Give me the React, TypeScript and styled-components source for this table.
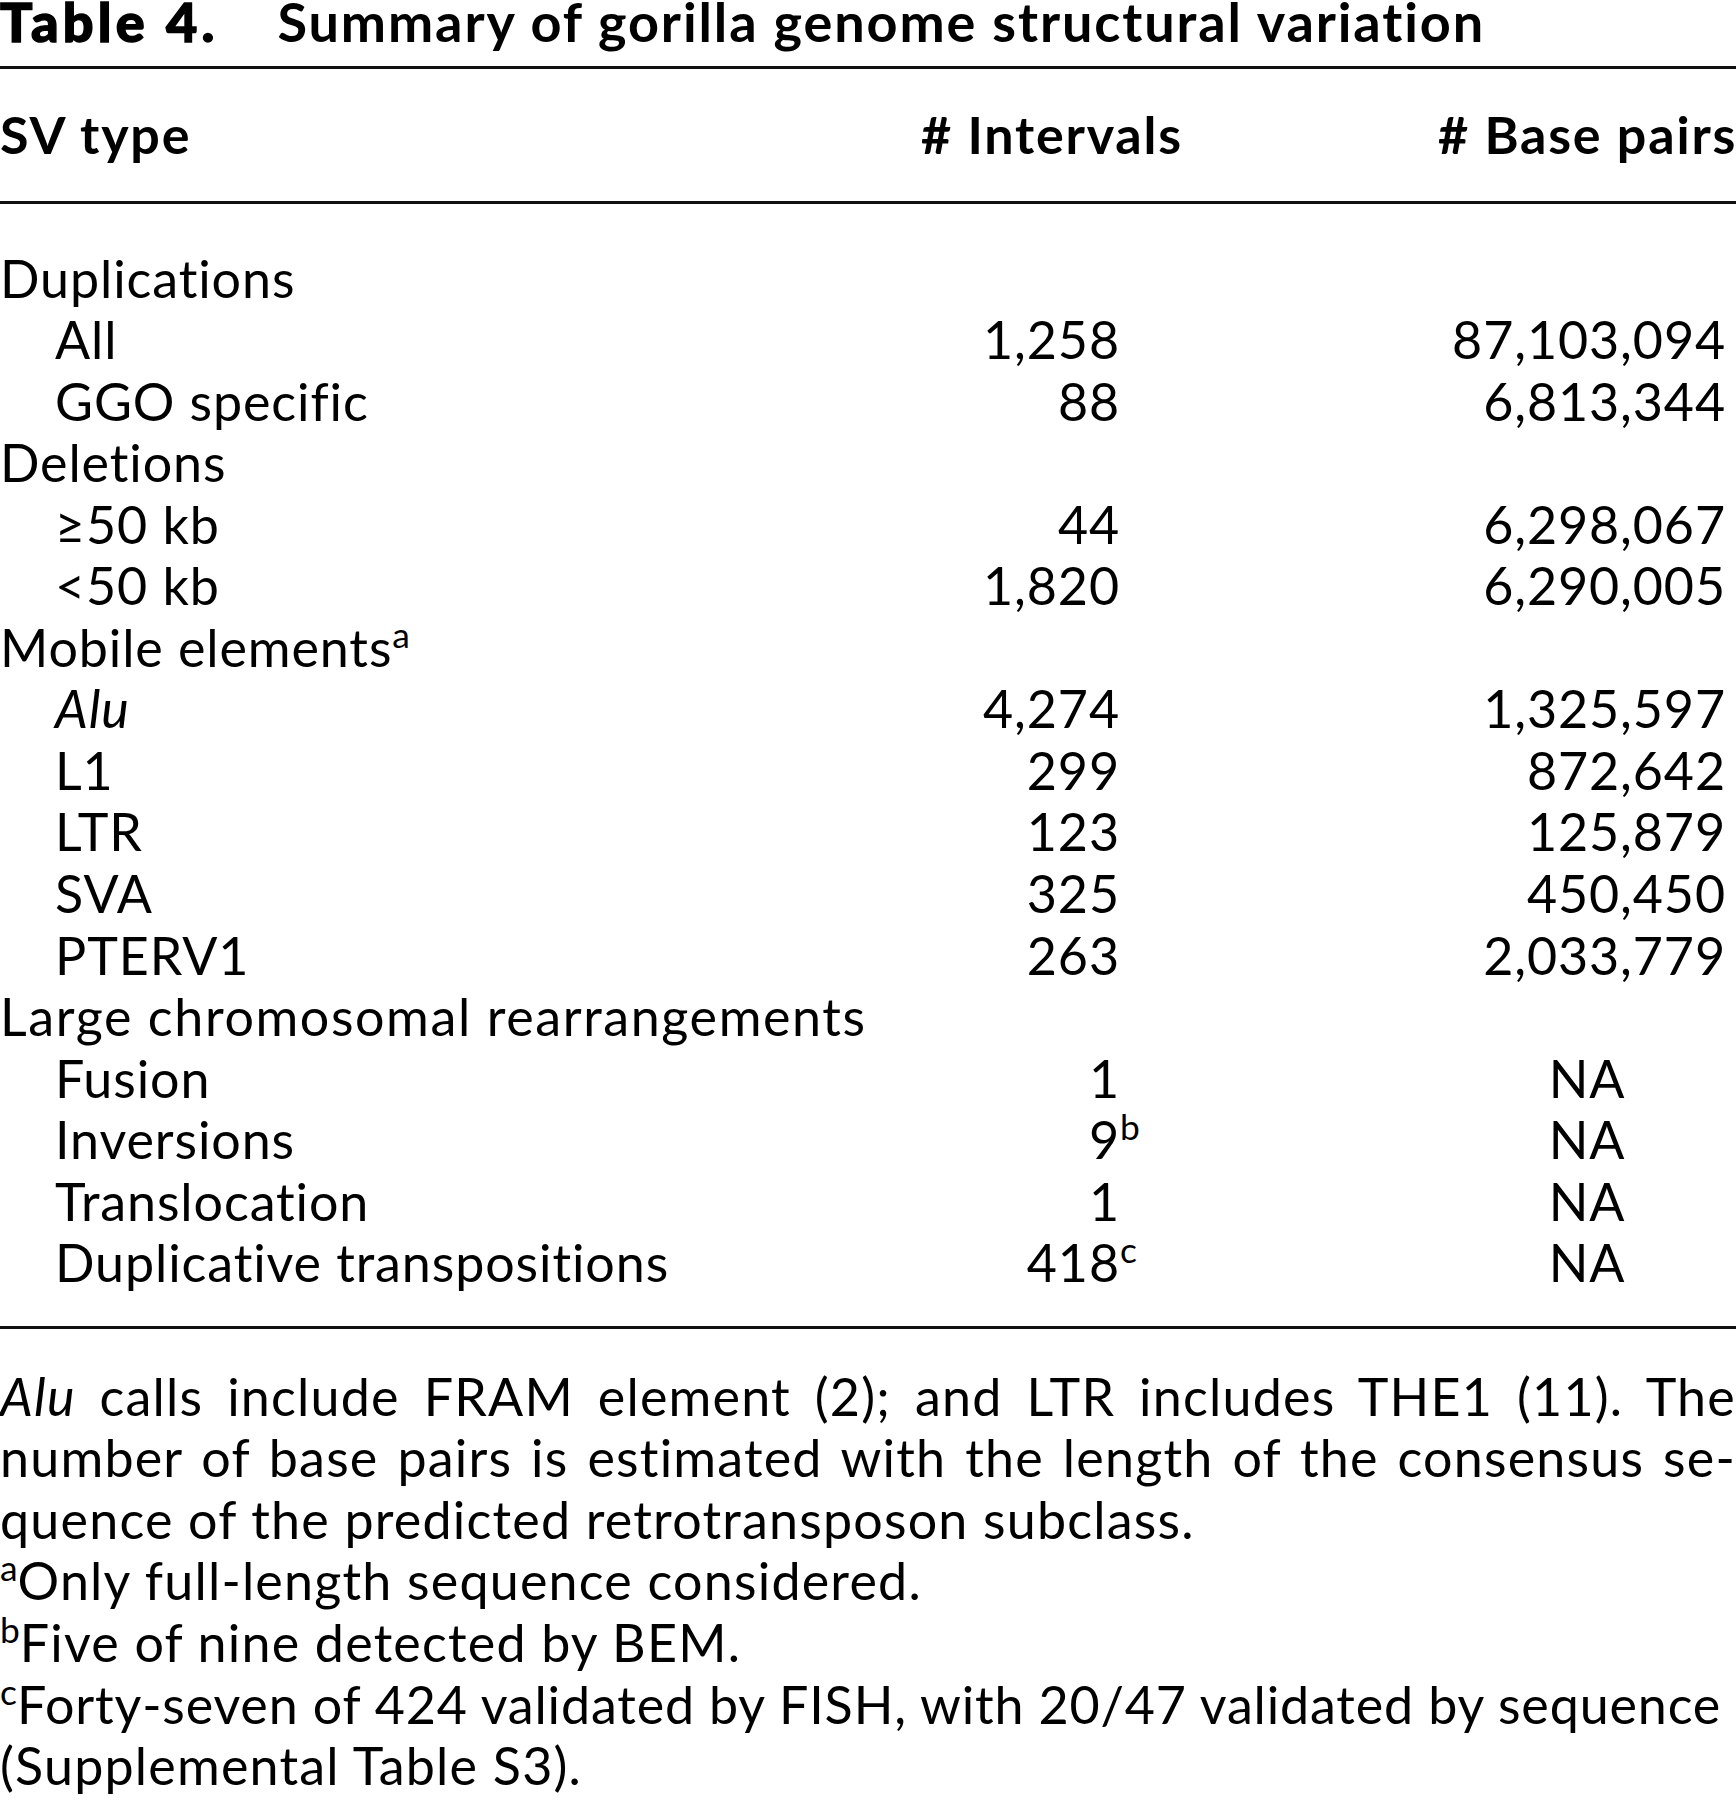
import React from "react";
import styled, { createGlobalStyle } from "styled-components";

const FONT = `"Lato", "Open Sans", "Liberation Sans", sans-serif`;

const Global = createGlobalStyle`
  html, body { margin: 0; padding: 0; background: #ffffff; }
  body { font-family: ${FONT}; color: #000; }
`;

const Page = styled.div`
  width: 1736px;
  overflow: hidden;
  font-size: 52px;
  letter-spacing: 0.9px;
  line-height: 61.55px;
  color: #000;
`;

const Caption = styled.div`
  display: flex;
  align-items: baseline;
  gap: 59px;
  height: 65.5px;
  font-size: 54px;
  line-height: 44px;
  white-space: nowrap;
`;

const CaptionLabel = styled.span`
  font-weight: 900;
  letter-spacing: 4.2px;
  -webkit-text-stroke: 1.4px #000;
`;

const CaptionTitle = styled.span`
  font-weight: 700;
  letter-spacing: 1.9px;
`;

const Rule = styled.div`
  height: 3px;
  background: #111;
`;

const HeadRow = styled.div`
  display: grid;
  grid-template-columns: 952px 200px 1fr;
  align-items: center;
  height: 132px;
  font-weight: 700;
  letter-spacing: 1.8px;
  white-space: nowrap;
`;

const HeadCell = styled.div<{ $center?: boolean; $offset?: number }>`
  display: flex;
  justify-content: ${(p) => (p.$center ? "center" : "flex-start")};
  padding-left: ${(p) => p.$offset ?? 0}px;
`;

const Body = styled.div`
  padding: 44px 0 32px;
`;

const Row = styled.div`
  display: grid;
  grid-template-columns: 952px 200px 1fr;
  height: 61.55px;
  white-space: nowrap;
`;

const LabelCell = styled.div<{ $indent?: boolean; $wide?: boolean }>`
  padding-left: ${(p) => (p.$indent ? "55px" : "0")};
  letter-spacing: ${(p) => (p.$wide ? "1.6px" : "0.9px")};
`;

const NumCell = styled.div<{ $pad: number; $offset?: number; $center?: boolean }>`
  text-align: ${(p) => (p.$center ? "center" : "right")};
  padding-left: ${(p) => p.$offset ?? 0}px;
  padding-right: ${(p) => (p.$center ? 0 : p.$pad)}px;
`;

const Sup = styled.sup<{ $hang?: boolean }>`
  font-size: 0.68em;
  letter-spacing: 0;
  line-height: 0;
  vertical-align: 0.55em;
  ${(p) => (p.$hang ? "display: inline-block; width: 0; overflow: visible;" : "")}
`;

const Notes = styled.div`
  padding-top: 37px;
  letter-spacing: 1.2px;
`;

const NoteLine = styled.div<{ $justify?: boolean; $tight?: boolean }>`
  white-space: ${(p) => (p.$justify ? "normal" : "nowrap")};
  text-align: ${(p) => (p.$justify ? "justify" : "left")};
  text-align-last: ${(p) => (p.$justify ? "justify" : "left")};
  ${(p) => (p.$tight ? "letter-spacing: 0.85px;" : "")}
`;

type RowData = {
  label: React.ReactNode;
  indent?: boolean;
  wide?: boolean;
  iv?: string;
  ivSup?: string;
  bp?: string;
};

const rows: RowData[] = [
  { label: "Duplications" },
  { label: "All", indent: true, iv: "1,258", bp: "87,103,094" },
  { label: "GGO specific", indent: true, iv: "88", bp: "6,813,344" },
  { label: "Deletions" },
  { label: "\u226550 kb", indent: true, iv: "44", bp: "6,298,067" },
  { label: "<50 kb", indent: true, iv: "1,820", bp: "6,290,005" },
  { label: (<>Mobile elements<Sup>a</Sup></>) },
  { label: <i>Alu</i>, indent: true, iv: "4,274", bp: "1,325,597" },
  { label: "L1", indent: true, iv: "299", bp: "872,642" },
  { label: "LTR", indent: true, iv: "123", bp: "125,879" },
  { label: "SVA", indent: true, iv: "325", bp: "450,450" },
  { label: "PTERV1", indent: true, iv: "263", bp: "2,033,779" },
  { label: "Large chromosomal rearrangements", wide: true },
  { label: "Fusion", indent: true, iv: "1", bp: "NA" },
  { label: "Inversions", indent: true, iv: "9", ivSup: "b", bp: "NA" },
  { label: "Translocation", indent: true, iv: "1", bp: "NA" },
  { label: "Duplicative transpositions", indent: true, iv: "418", ivSup: "c", bp: "NA" },
];

export default function App() {
  return (
    <>
      <Global />
      <Page>
        <Caption>
          <CaptionLabel>Table 4.</CaptionLabel>
          <CaptionTitle>Summary of gorilla genome structural variation</CaptionTitle>
        </Caption>
        <Rule />
        <HeadRow>
          <HeadCell>SV type</HeadCell>
          <HeadCell $center># Intervals</HeadCell>
          <HeadCell $offset={286}># Base pairs</HeadCell>
        </HeadRow>
        <Rule />
        <Body>
          {rows.map((r, i) => (
            <Row key={i}>
              <LabelCell $indent={r.indent} $wide={r.wide}>
                {r.label}
              </LabelCell>
              <NumCell $pad={32}>
                {r.iv}
                {r.ivSup && <Sup $hang>{r.ivSup}</Sup>}
              </NumCell>
              <NumCell $pad={10} $offset={286} $center={r.bp === "NA"}>
                {r.bp}
              </NumCell>
            </Row>
          ))}
        </Body>
        <Rule />
        <Notes>
          <NoteLine $justify>
            <i>Alu</i> calls include FRAM element (2); and LTR includes THE1 (11). The
          </NoteLine>
          <NoteLine $justify>
            number of base pairs is estimated with the length of the consensus se-
          </NoteLine>
          <NoteLine>quence of the predicted retrotransposon subclass.</NoteLine>
          <NoteLine>
            <Sup>a</Sup>Only full-length sequence considered.
          </NoteLine>
          <NoteLine>
            <Sup>b</Sup>Five of nine detected by BEM.
          </NoteLine>
          <NoteLine $tight>
            <Sup>c</Sup>Forty-seven of 424 validated by FISH, with 20/47 validated by sequence
          </NoteLine>
          <NoteLine>(Supplemental Table S3).</NoteLine>
        </Notes>
      </Page>
    </>
  );
}
